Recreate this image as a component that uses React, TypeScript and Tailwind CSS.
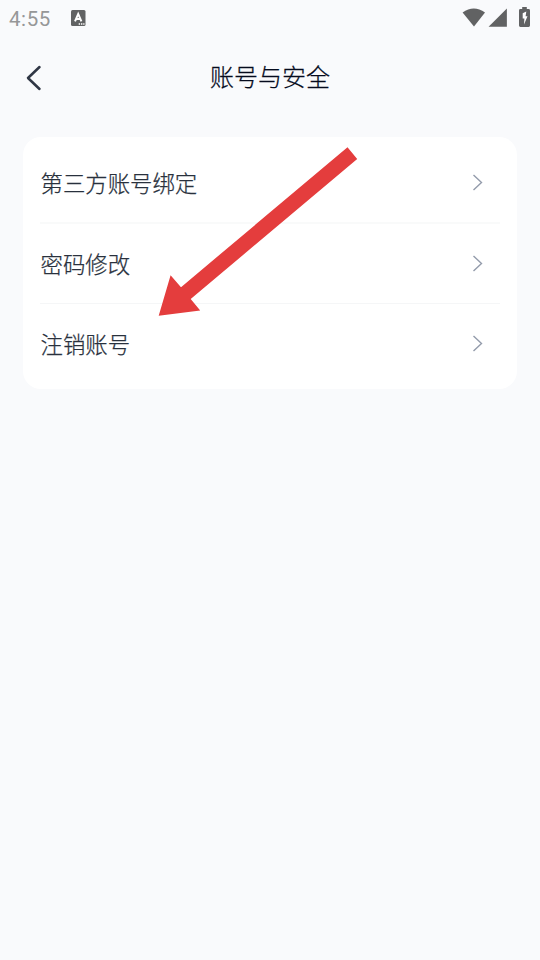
import React from 'react';

const items = [
  { title: '第三方账号绑定' },
  { title: '密码修改' },
  { title: '注销账号' },
];

const StatusBar: React.FC = () => (
  <div className="flex h-9 items-center justify-between pl-[9px] pr-[10px]">
    <div className="flex items-center gap-5">
      <span className="font-['Roboto',sans-serif] text-[20.5px] leading-9 tracking-[0.6px] text-[#969798] mt-[2px]">
        4:55
      </span>
      <svg width="15" height="16" viewBox="0 0 15 16">
        <rect width="14.5" height="16" rx="1.5" fill="#616263" />
        <path d="M4 11.3 7.2 3.9 10.4 11.3M5.3 8.9H9.1" fill="none" stroke="#fff" strokeWidth="2" />
        <path d="M7.7 13.3h1.4v1.4H7.7zM10 13.3h1.4v1.4H10zM12.2 13.3h1.3v1.4h-1.3z" fill="#fff" />
      </svg>
    </div>

    <div className="-mt-[2px] flex items-center text-[#616263]">
      <svg width="23" height="19" viewBox="0 0 23 19" className="mr-[3px]" fill="currentColor">
        <path d="M0.6 4.4Q11.8-3.6 23 4.4L12 18.6Z" />
      </svg>
      <svg width="19" height="19" viewBox="0 0 19 19" className="mr-3" fill="currentColor">
        <path d="M0.6 18.7 18.9 0.5V18.7Z" />
      </svg>
      <svg width="11" height="20" viewBox="0 0 11 20" fill="currentColor">
        <path d="M3.2 0h4.6v2H9.6Q11 2 11 3.4V18.6Q11 20 9.6 20H1.4Q0 20 0 18.6V3.4Q0 2 1.4 2H3.2Z" />
        <path d="M7.3 4.5 3.7 6.2V11.4H5.4L5 17.4 8.5 9.2H6.6Z" fill="#fff" />
      </svg>
    </div>
  </div>
);

const App: React.FC = () => {
  return (
    <div className="min-h-screen w-full overflow-hidden bg-[#f9fafc] font-['Noto_Sans_CJK_SC',sans-serif]">
      <StatusBar />

      {/* Header */}
      <header className="grid h-[84px] grid-cols-[70px_1fr_70px] items-center">
        <button className="pl-[26px]" aria-label="返回">
          <svg width="16" height="26" viewBox="0 0 16 26" fill="none">
            <path
              d="M13.5 2 2 13 13.5 24"
              stroke="#303745"
              strokeWidth="2.5"
              strokeLinecap="round"
              strokeLinejoin="round"
            />
          </svg>
        </button>
        <h1 className="pb-[4px] text-center text-2xl font-light text-[#050b1d] [-webkit-text-stroke:0.25px]">
          账号与安全
        </h1>
      </header>

      {/* Settings list */}
      <main className="px-[23px] pt-[17px]">
        <div className="relative h-[252px] rounded-[18px] bg-white px-[17px] pt-[5px]">
          {items.map((item, index) => (
            <div
              key={index}
              className="flex h-[80px] items-center justify-between border-b border-[#f5f6f7] pr-[17px] first:h-[82px] first:border-b-2 first:border-[#f9fafa] last-of-type:h-[79px] last-of-type:border-b-0"
            >
              <span className="pl-[0.5px] pt-[1.4px] text-[22.4px] font-light text-[#29313d] [-webkit-text-stroke:0.25px]">
                {item.title}
              </span>
              <svg width="10" height="17" viewBox="0 0 10 17" fill="none">
                <path d="M0.5 1 8.5 8.5 0.5 16" stroke="#939bab" strokeWidth="1.4" />
              </svg>
            </div>
          ))}

          {/* Pointer to the last entry */}
          <svg
            width="200"
            height="170"
            viewBox="0 0 200 170"
            className="pointer-events-none absolute left-[135px] top-[10px]"
          >
            <path
              d="M0.7 168.8 12.6 128.3 23 140.2 189.5 0.2 199.2 12 32.7 152 42.2 163.5Z"
              fill="#e43d3d"
            />
          </svg>
        </div>
      </main>
    </div>
  );
};

export default App;
